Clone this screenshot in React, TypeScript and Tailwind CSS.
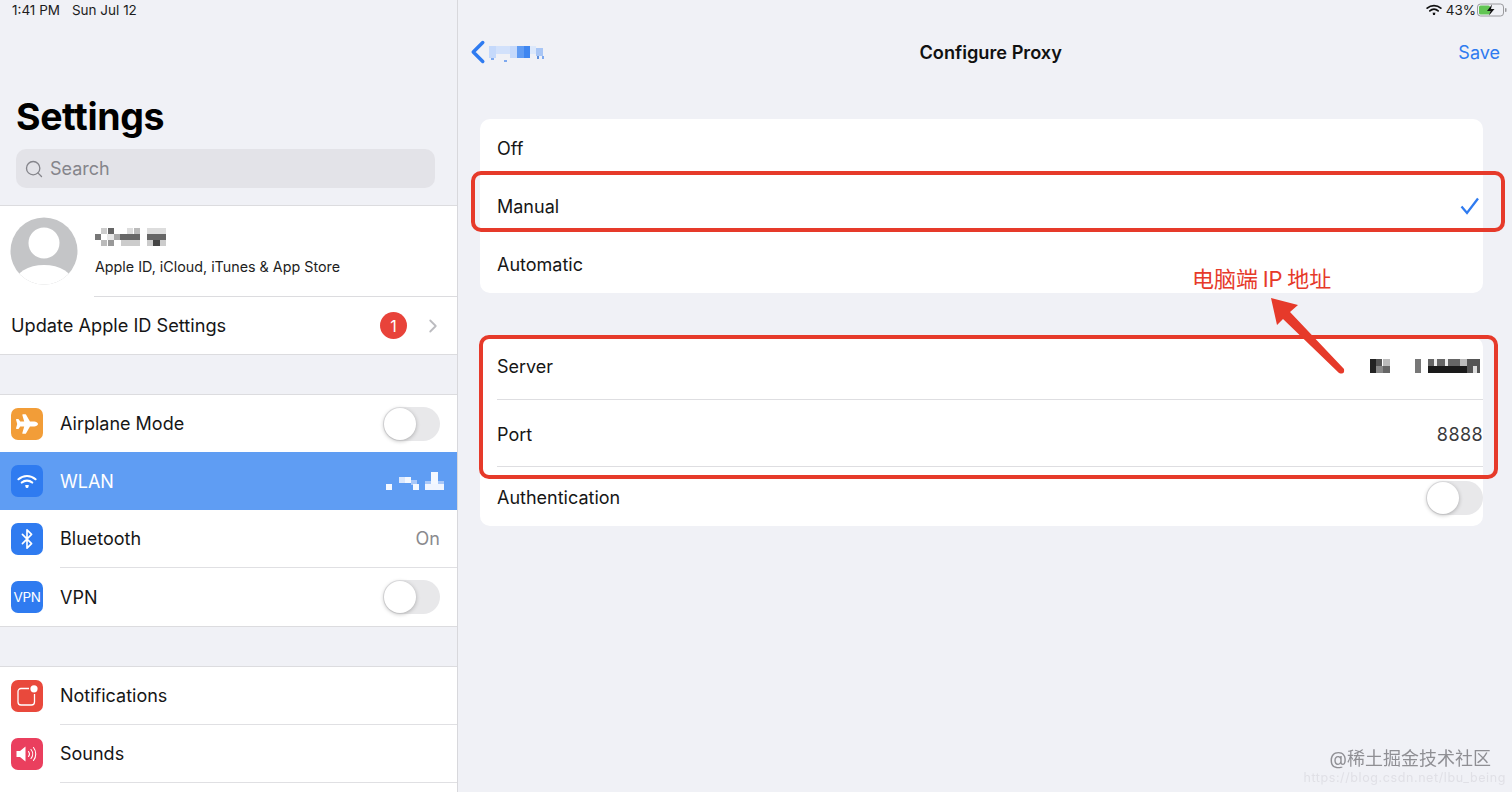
import { Bluetooth, ChevronLeft, ChevronRight, Search } from 'lucide-react';
import { FaPlane } from 'react-icons/fa';

const FONT = "font-['Inter','Noto_Sans_CJK_SC',sans-serif]";

// ── Mosaics that hide private text ─────────────────────────────────────────────
type Cell = [number, number, number, number, string];

function Mosaic({ w, h, cells, className }: { w: number; h: number; cells: Cell[]; className?: string }) {
  return (
    <svg width={w} height={h} viewBox={`0 0 ${w} ${h}`} className={`shrink-0 blur-[0.5px] ${className ?? ''}`}>
      {cells.map(([x, y, cw, ch, fill], i) => (
        <rect key={i} x={x} y={y} width={cw} height={ch} fill={fill} />
      ))}
    </svg>
  );
}

const NAME_CELLS: Cell[] = [
  [0, 7, 6, 6, '#777'], [6, 1, 6, 6, '#ccc'], [6, 13, 6, 6, '#bbb'], [13, 1, 6, 6, '#666'], [12, 7, 13, 6, '#e8e8e8'],
  [13, 13, 6, 6, '#999'], [19, 7, 6, 6, '#aaa'], [25, 7, 20, 6, '#666'], [32, 1, 6, 6, '#ddd'], [39, 1, 6, 6, '#bbb'], [26, 13, 19, 6, '#ccc'],
  [52, 1, 19, 6, '#ddd'], [52, 7, 19, 6, '#666'], [58, 13, 7, 6, '#444'], [52, 13, 6, 6, '#ccc'], [65, 13, 6, 6, '#ccc'],
];

const WLAN_CELLS: Cell[] = [
  [0, 12, 6, 6, '#f4f8ff'], [13, 5, 6, 6, '#dbe8fd'], [19, 5, 6, 6, '#f4f8ff'], [25, 8, 6, 5, '#a9c8f9'], [27, 12, 6, 6, '#f4f8ff'],
  [39, 12, 19, 6, '#f0f5ff'], [39, 9, 19, 3, '#a9c8f9'], [45, 0, 7, 12, '#f4f8ff'],
];

const SERVER_CELLS: Cell[] = [
  [0, 0, 6, 14, '#222'], [6, 0, 6, 7, '#555'], [6, 7, 7, 7, '#888'], [13, 0, 7, 7, '#bbb'], [13, 7, 7, 7, '#666'],
  [45, 0, 6, 14, '#777'], [58, 0, 32, 7, '#666'], [58, 7, 45, 7, '#1a1a1a'], [64, 0, 3, 7, '#eee'], [75, 0, 3, 7, '#eee'], [90, 0, 7, 7, '#bbb'], [97, 0, 13, 14, '#555'], [103, 7, 4, 7, '#ddd'],
];

const BACK_CELLS: Cell[] = [
  [0, 4, 7, 12, '#c5d9fb'], [7, 4, 14, 8, '#d2e1fb'], [21, 4, 7, 12, '#c5d9fb'], [28, 4, 7, 12, '#5f9bf3'], [35, 4, 6, 12, '#3f86f0'],
  [41, 4, 6, 8, '#dce8fb'], [47, 6, 7, 8, '#a9c6f5'], [2, 16, 3, 2, '#7ea9ef'], [15, 18, 3, 2, '#7ea9ef'], [48, 14, 2, 3, '#5f8fdc'], [53, 14, 2, 3, '#7ea9ef'],
];

// ── Settings sidebar rows ──────────────────────────────────────────────────────
function Toggle() {
  return (
    <div className="w-[57px] h-[34px] rounded-full bg-[#e8e8ea] flex items-center pl-[1px]">
      <div className="w-[32px] h-[32px] rounded-full bg-white shadow-[0_1px_4px_rgba(0,0,0,0.28)]" />
    </div>
  );
}

function SideRow({
  icon, label, right, selected, divider, height = 'h-[58px]',
}: {
  icon: React.ReactNode; label: string; right?: React.ReactNode; selected?: boolean; divider?: boolean; height?: string;
}) {
  return (
    <div className={`${height} shrink-0 flex items-center pl-[11px] ${selected ? 'bg-[#5f9df3]' : 'bg-white'}`}>
      <div className="w-[32px] h-[32px] shrink-0">{icon}</div>
      <div className={`ml-[17px] flex-1 h-full flex items-center pr-[17px] ${divider ? 'border-b border-[#e0e0e3]' : ''}`}>
        <span className={`text-[18px] ${selected ? 'text-white' : 'text-[#161616]'}`}>{label}</span>
        <div className="ml-auto flex items-center">{right}</div>
      </div>
    </div>
  );
}

function IconTile({ color, children }: { color: string; children?: React.ReactNode }) {
  return (
    <div className={`w-[32px] h-[32px] rounded-[7px] flex items-center justify-center text-white ${color}`}>{children}</div>
  );
}

function WifiGlyph({ size, color }: { size: number; color: string }) {
  return (
    <svg width={size} height={size * 0.75} viewBox="0 0 20 15" fill="none" stroke={color} strokeWidth="2.2" strokeLinecap="round">
      <path d="M1.5 5.2C6.3 .9 13.7 .9 18.5 5.2" />
      <path d="M4.8 8.5C7.8 5.9 12.2 5.9 15.2 8.5" />
      <circle cx="10" cy="12.4" r="1.5" fill={color} stroke="none" />
      <path d="M8 11 L10 14 L12 11 Z" fill={color} stroke="none" />
    </svg>
  );
}

function Sidebar() {
  return (
    <aside className="w-[458px] h-full shrink-0 border-r border-[#d8d8dc] flex flex-col overflow-hidden">
      <div className="h-[20px] shrink-0 pl-[12px] flex items-center text-[13.5px] text-[#1c1c1c]">
        <span>1:41 PM</span>
        <span className="ml-[12px]">Sun Jul 12</span>
      </div>
      <h1 className="mt-[72px] ml-[16px] h-[50px] shrink-0 leading-[50px] text-[37.5px] font-bold tracking-[-0.4px] text-black">Settings</h1>
      <div className="mt-[7px] ml-[16px] w-[419px] h-[39px] shrink-0 rounded-[10px] bg-[#e3e3e8] flex items-center pl-[8px] text-[#85858b]">
        <Search size={20} strokeWidth={1.6} />
        <span className="ml-[6px] text-[18px]">Search</span>
      </div>

      <div className="mt-[17px] shrink-0 bg-white border-y border-[#dcdcdf]">
        <div className="h-[90px] flex items-start">
          <svg width="68" height="68" viewBox="0 0 68 68" className="mt-[11px] ml-[10px] shrink-0">
            <defs>
              <clipPath id="avatar"><circle cx="34" cy="34" r="33.5" /></clipPath>
            </defs>
            <circle cx="34" cy="34" r="33.5" fill="#c4c5c7" />
            <circle cx="34" cy="26" r="15.5" fill="#fff" />
            <ellipse cx="34" cy="66" rx="29" ry="18" fill="#fff" clipPath="url(#avatar)" />
          </svg>
          <div className="ml-[17px] flex flex-col">
            <Mosaic w={72} h={20} cells={NAME_CELLS} className="mt-[21px]" />
            <span className="mt-[11px] text-[14.3px] leading-[18px] text-[#1e1e1e]">Apple ID, iCloud, iTunes &amp; App Store</span>
          </div>
        </div>
        <div className="ml-[94px] border-t border-[#dcdcdf]" />
        <div className="h-[57px] flex items-center pl-[11px] pr-[13px]">
          <span className="text-[18.2px] text-[#161616]">Update Apple ID Settings</span>
          <div className="ml-auto w-[27px] h-[27px] rounded-full bg-[#e8433a] text-white text-[16px] flex items-center justify-center">1</div>
          <ChevronRight size={22} strokeWidth={2} className="ml-[15px] text-[#bcbcc0]" />
        </div>
      </div>

      <div className="mt-[39px] shrink-0 border-y border-[#dcdcdf]">
        <SideRow
          height="h-[57px]"
          icon={<IconTile color="bg-[#f29d38]"><FaPlane size={22} /></IconTile>}
          label="Airplane Mode"
          right={<Toggle />}
        />
        <SideRow
          selected
          icon={<IconTile color="bg-[#2f7bf0]"><WifiGlyph size={20} color="#fff" /></IconTile>}
          label="WLAN"
          right={<Mosaic w={58} h={18} cells={WLAN_CELLS} className="-mr-[4px]" />}
        />
        <SideRow
          divider
          icon={<IconTile color="bg-[#2f7bf0]"><Bluetooth size={22} strokeWidth={1.8} /></IconTile>}
          label="Bluetooth"
          right={<span className="text-[18px] text-[#8a8a8e]">On</span>}
        />
        <SideRow
          icon={<IconTile color="bg-[#2f7bf0]"><span className="text-[13.5px] tracking-[-0.4px]">VPN</span></IconTile>}
          label="VPN"
          right={<Toggle />}
        />
      </div>

      <div className="mt-[39px] shrink-0 border-t border-[#dcdcdf]">
        <SideRow
          divider
          height="h-[58px]"
          icon={
            <IconTile color="bg-[#e9493c]">
              <svg width="24" height="24" viewBox="0 0 24 24" fill="none" stroke="#fff" strokeWidth="1.3">
                <path d="M14 4.5H6a3 3 0 0 0-3 3V18a3 3 0 0 0 3 3h10.5a3 3 0 0 0 3-3v-8" />
                <circle cx="19" cy="4.8" r="3.6" fill="#fff" stroke="none" />
              </svg>
            </IconTile>
          }
          label="Notifications"
        />
        <SideRow
          divider
          icon={
            <IconTile color="bg-[#ea3f5e]">
              <svg width="24" height="24" viewBox="0 0 24 24" fill="none" stroke="#fff" strokeWidth="1.1" strokeLinecap="round">
                <path d="M1.5 9h3.5l5.5-4.5v15L5 15H1.5z" fill="#fff" stroke="none" />
                <path d="M13.5 9.5a4 4 0 0 1 0 5" />
                <path d="M16 7.5a7 7 0 0 1 0 9" />
                <path d="M18.5 5.5a10.500 10.500 0 0 1 0 13" />
              </svg>
            </IconTile>
          }
          label="Sounds"
        />
        <div className="h-[20px] bg-white" />
      </div>
    </aside>
  );
}

// ── Right hand detail pane ─────────────────────────────────────────────────────
function StatusRight() {
  return (
    <div className="h-[20px] flex items-center justify-end pr-[4px] text-[13.5px] text-[#1c1c1c]">
      <WifiGlyph size={16} color="#111" />
      <span className="ml-[4px]">43%</span>
      <svg width="31" height="14" viewBox="0 0 31 14" className="ml-[1px]">
        <rect x="0.5" y="1" width="26" height="12" rx="3" fill="none" stroke="#9a9a9e" />
        <rect x="2" y="2.500" width="11" height="9" rx="1.500" fill="#62c554" />
        <path d="M15 1.500 L10 8 H13.500 L12 12.500 L17.500 6 H14 Z" fill="#111" />
        <rect x="28" y="5" width="1.500" height="4" rx="0.700" fill="#9a9a9e" />
      </svg>
    </div>
  );
}

function NavBar() {
  return (
    <div className="h-[64px] flex items-center relative">
      <ChevronLeft size={38} strokeWidth={2.2} className="ml-[1px] text-[#2f7bf0] shrink-0" />
      <Mosaic w={56} h={20} cells={BACK_CELLS} className="-ml-[8px]" />
      <span className="flex-1 text-center text-[18.2px] font-semibold text-[#111] pr-[22px] pt-[1px]">Configure Proxy</span>
      <span className="mr-[12px] text-[18px] text-[#2f7bf0]">Save</span>
    </div>
  );
}

function DetailRow({ label, right, divider, height }: { label: string; right?: React.ReactNode; divider?: boolean; height: string }) {
  return (
    <div className={`${height} ml-[17px] flex items-center ${divider ? 'border-b border-[#dedee1]' : ''}`}>
      <span className="text-[18px] text-[#161616]">{label}</span>
      <div className="ml-auto flex items-center">{right}</div>
    </div>
  );
}

function Detail() {
  return (
    <main className="flex-1 h-full relative">
      <StatusRight />
      <NavBar />
      <div className="mt-[35px] ml-[22px] w-[1003px] flex flex-col">
        <div className="h-[174px] bg-white rounded-[10px] flex flex-col">
          <DetailRow label="Off" height="h-[58px]" />
          <DetailRow
            label="Manual"
            height="h-[58px]"
            right={
              <svg width="20" height="18" viewBox="0 0 20 18" fill="none" stroke="#2f7bf0" strokeWidth="2.3" className="mr-[3px]">
                <path d="M1.500 9.500 L7 16 L18 1.500" />
              </svg>
            }
          />
          <DetailRow label="Automatic" height="h-[58px]" />
        </div>
        <div className="mt-[44px] h-[189px] bg-white rounded-[10px] flex flex-col">
          <DetailRow
            label="Server"
            height="h-[63px] pb-[4px]"
            divider
            right={<Mosaic w={110} h={14} cells={SERVER_CELLS} className="mr-[3px]" />}
          />
          <DetailRow
            label="Port"
            height="h-[67px] pt-[2px]"
            divider
            right={<span className="text-[18px] tracking-[0.4px] text-[#3a3a3c]">8888</span>}
          />
          <DetailRow label="Authentication" height="h-[59px] pt-[2px]" right={<Toggle />} />
        </div>
      </div>

      {/* red annotations drawn over the screenshot */}
      <div className="absolute left-[13px] top-[171px] w-[1034px] h-[61px] rounded-[10px] border-[4px] border-[#e63a2a]" />
      <div className="absolute left-[21px] top-[335px] w-[1019px] h-[144px] rounded-[10px] border-[4px] border-[#e63a2a]" />
      <div className="absolute left-[734px] top-[266px] text-[22px] leading-[26px] text-[#e63a2a] whitespace-nowrap [word-spacing:-1.5px]">电脑端 IP 地址</div>
      <svg width="80" height="84" viewBox="0 0 80 84" className="absolute left-[810px] top-[295px]">
        <path d="M3 3 L30 10 L22 17 L76 74 Q77 80 71 78 L15 24 L9 30 Z" fill="#e63a2a" />
      </svg>

      {/* watermark */}
      <div className="absolute right-[21px] top-[748px] text-[18px] leading-[22px] text-[#8f8f94] blur-[0.4px]">@稀土掘金技术社区</div>
      <div className="absolute right-[6px] top-[770px] text-[12.5px] leading-[16px] text-[#e0e0e6] tracking-[0.6px] whitespace-nowrap blur-[0.4px]">https://blog.csdn.net/lbu_being</div>
    </main>
  );
}

export default function App() {
  return (
    <div className={`${FONT} w-[1512px] h-[792px] overflow-hidden flex bg-[#f0f1f6]`}>
      <Sidebar />
      <Detail />
    </div>
  );
}
